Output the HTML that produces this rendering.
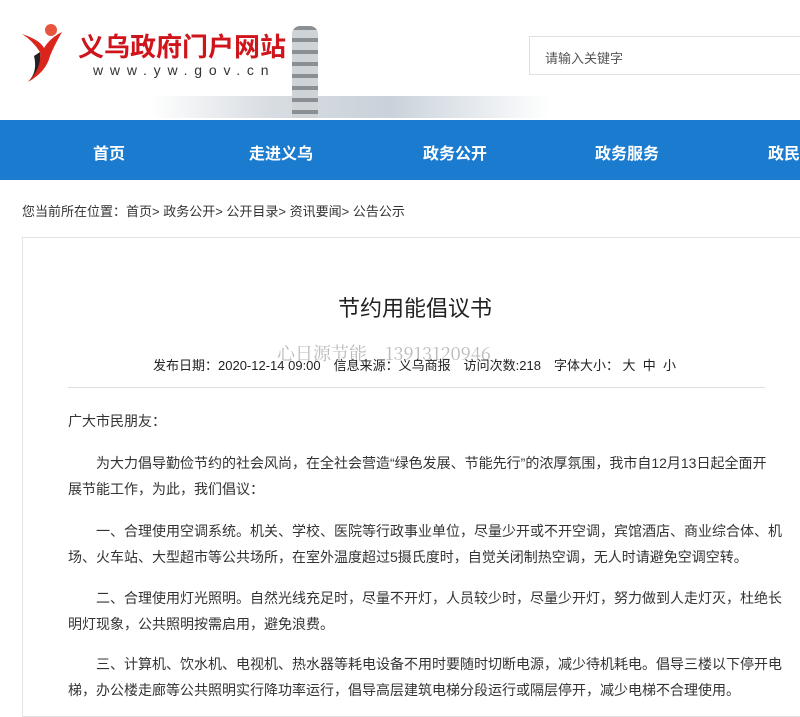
<!DOCTYPE html>
<html><head><meta charset="utf-8"><style>
*{margin:0;padding:0;box-sizing:border-box}
body{width:800px;height:704px;overflow:hidden;background:#fff;font-family:"Liberation Sans","Noto Sans CJK SC",sans-serif;color:#333;position:relative}
.a{position:absolute;white-space:nowrap}
.nav{position:absolute;left:0;top:120px;width:800px;height:60px;background:#1a7bcf;overflow:hidden}
.nav span{position:absolute;top:20px;color:#fff;font-size:16px;font-weight:bold;transform:translateX(-50%);white-space:nowrap}
.p{position:absolute;left:68px;font-size:14px;color:#333;white-space:nowrap}
</style></head><body>
<svg class="a" style="left:20px;top:22px" width="50" height="62" viewBox="0 0 50 62">
<circle cx="31" cy="8" r="6" fill="#e8553e"/>
<path d="M2 12 Q20 18 24 26 Q30 16 42 10 Q34 24 30 34 Q26 50 8 60 Q22 44 20 30 Q12 18 2 12Z" fill="#d9251c"/>
<path d="M20 30 Q22 46 8 60 Q18 50 14 34Z" fill="#222"/>
</svg>
<div class="a" style="left:150px;top:96px;width:400px;height:22px;background:linear-gradient(90deg,#fff,#d8dde2 30%,#c9d2da 60%,#fff)"></div>
<div class="a" style="left:292px;top:26px;width:26px;height:92px;background:repeating-linear-gradient(180deg,#8a8f94 0 4px,#cfd3d6 4px 12px);border-radius:8px 8px 0 0"></div>
<div class="a" style="left:78px;top:27px;font-size:26px;font-weight:bold;color:#d0141b;font-family:'Noto Sans CJK SC',sans-serif">义乌政府门户网站</div>
<div class="a" style="left:93px;top:62px;font-size:14px;letter-spacing:6.8px;color:#333">www.yw.gov.cn</div>
<div class="a" style="left:529px;top:36px;width:290px;height:39px;border:1px solid #e0e0e0"></div>
<div class="a" style="left:545px;top:48px;font-size:13px;color:#555">请输入关键字</div>
<div class="nav"><span style="left:109px">首页</span><span style="left:281px">走进义乌</span><span style="left:455px">政务公开</span><span style="left:627px">政务服务</span><span style="left:768px;transform:none">政民互动</span></div>
<div class="a" style="left:22px;top:201px;font-size:13px;color:#333">您当前所在位置：首页&gt; 政务公开&gt; 公开目录&gt; 资讯要闻&gt; 公告公示</div>
<div class="a" style="left:22px;top:237px;width:800px;height:480px;border:1px solid #e3e3e3"></div>
<div class="a" style="left:0;width:830px;top:291px;text-align:center;font-size:22px;color:#222">节约用能倡议书</div>
<div class="a" style="left:277px;top:340px;font-size:18px;color:#bbb;font-family:'Noto Serif CJK SC',serif">心日源节能　13913120946</div>
<div class="a" style="left:153px;top:355px;font-size:13px;color:#222">发布日期：2020-12-14 09:00　信息来源：义乌商报　访问次数:218　字体大小：&nbsp;大&nbsp;&nbsp;中&nbsp;&nbsp;小</div>
<div class="a" style="left:68px;top:387px;width:697px;height:1px;background:#ddd"></div>
<div class="p" style="top:411px">广大市民朋友：</div>
<div class="p" style="top:453px">　　为大力倡导勤俭节约的社会风尚，在全社会营造“绿色发展、节能先行”的浓厚氛围，我市自12月13日起全面开</div>
<div class="p" style="top:479px">展节能工作，为此，我们倡议：</div>
<div class="p" style="top:521px">　　一、合理使用空调系统。机关、学校、医院等行政事业单位，尽量少开或不开空调，宾馆酒店、商业综合体、机</div>
<div class="p" style="top:547px">场、火车站、大型超市等公共场所，在室外温度超过5摄氏度时，自觉关闭制热空调，无人时请避免空调空转。</div>
<div class="p" style="top:588px">　　二、合理使用灯光照明。自然光线充足时，尽量不开灯，人员较少时，尽量少开灯，努力做到人走灯灭，杜绝长</div>
<div class="p" style="top:614px">明灯现象，公共照明按需启用，避免浪费。</div>
<div class="p" style="top:654px">　　三、计算机、饮水机、电视机、热水器等耗电设备不用时要随时切断电源，减少待机耗电。倡导三楼以下停开电</div>
<div class="p" style="top:680px">梯，办公楼走廊等公共照明实行降功率运行，倡导高层建筑电梯分段运行或隔层停开，减少电梯不合理使用。</div>
</body></html>
